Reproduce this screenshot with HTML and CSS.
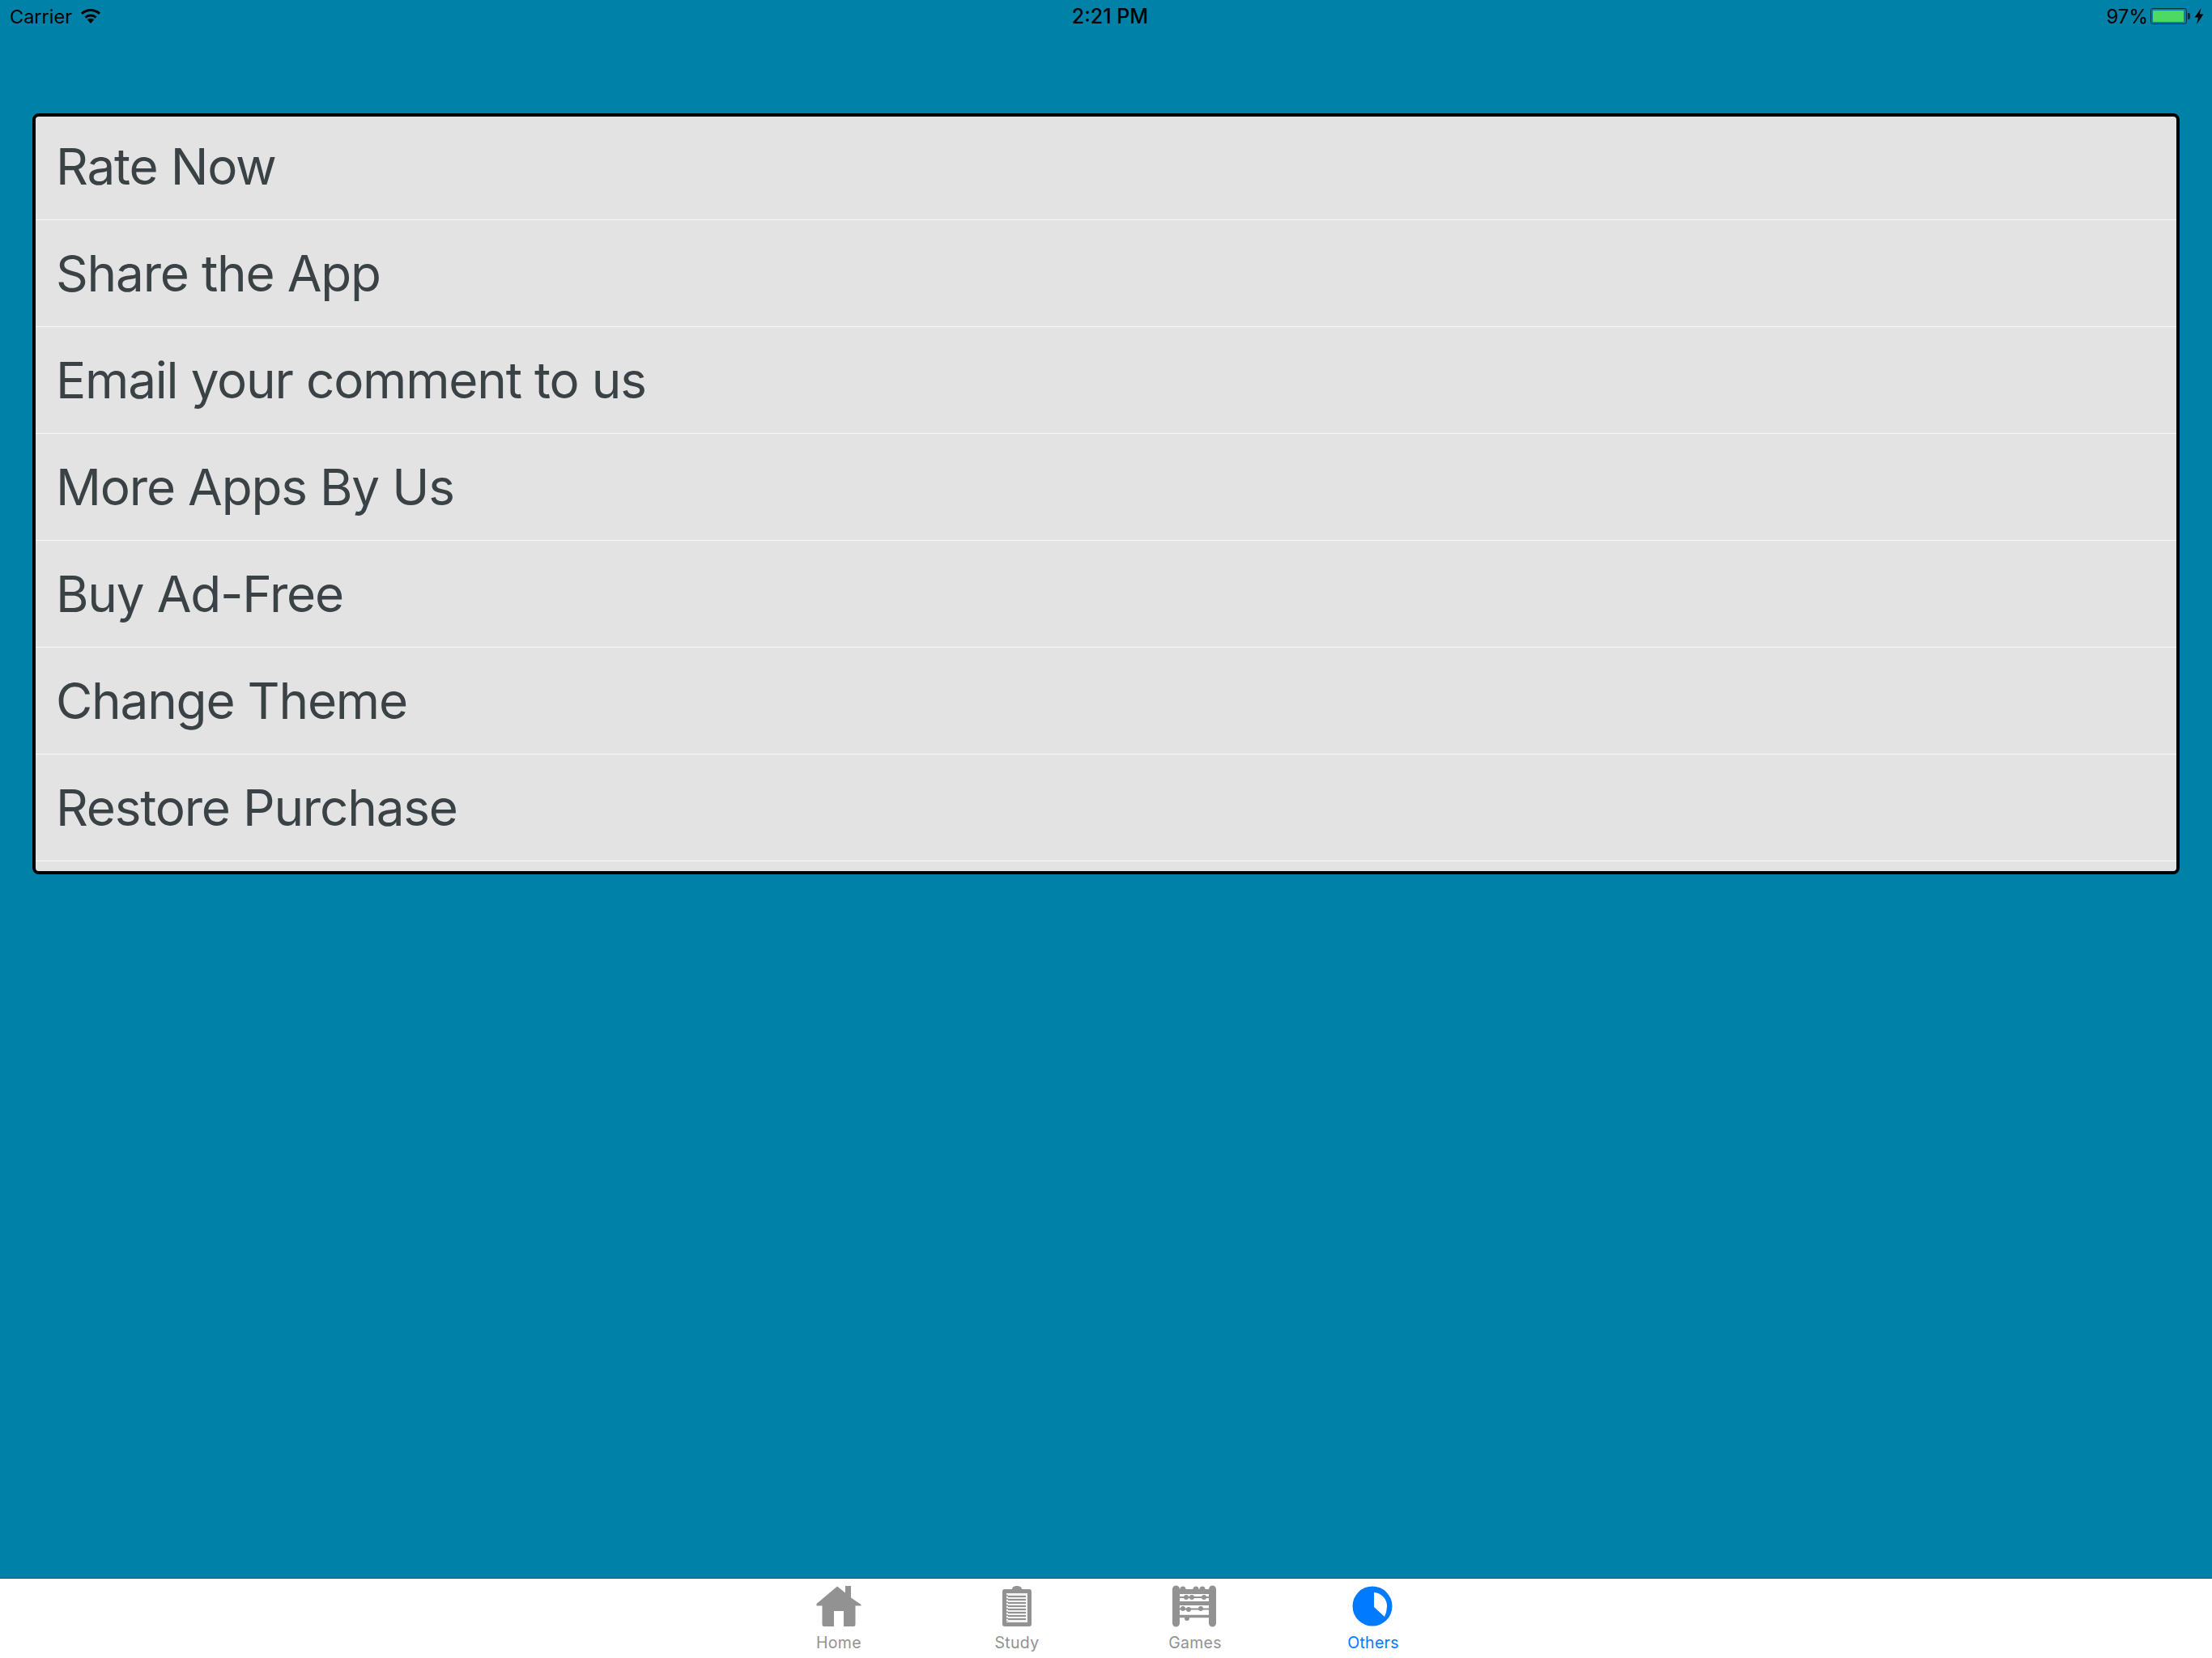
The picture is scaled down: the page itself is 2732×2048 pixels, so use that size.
FILE: index.html
```html
<!DOCTYPE html>
<html lang="en">
<head>
    <meta charset="UTF-8">
    <meta name="viewport" content="width=device-width, initial-scale=1.0">
    <title>Others</title>
    <link rel="stylesheet" href="styles.css">
</head>
<body>

    <div class="status-bar">
        <div class="status-left">
            <span class="carrier">Carrier</span>
            <svg class="wifi" width="26" height="18" viewBox="0 0 26 18">
                <path d="M13 18 L8.8 13.2 C11.2 11.2 14.8 11.2 17.2 13.2 Z" fill="#000"/>
                <path d="M6.4 10.6 C10.2 7.2 15.8 7.2 19.6 10.6" fill="none" stroke="#000" stroke-width="3"/>
                <path d="M2 5.8 C8.4 0.2 17.6 0.2 24 5.8" fill="none" stroke="#000" stroke-width="3"/>
            </svg>
        </div>
        <div class="status-time">2:21 PM</div>
        <div class="status-right">
            <span class="percent">97%</span>
            <div class="battery">
                <div class="battery-level"></div>
            </div>
            <div class="battery-tip"></div>
            <svg class="bolt" width="12" height="20" viewBox="0 0 12 20">
                <path d="M8.5 0 L0.5 11.5 H5 L3 20 L11.500 7.500 H6.800 Z" fill="#000"/>
            </svg>
        </div>
    </div>

    <main class="content">
        <ul class="menu">
            <li class="menu-row">Rate Now</li>
            <li class="menu-row">Share the App</li>
            <li class="menu-row">Email your comment to us</li>
            <li class="menu-row">More Apps By Us</li>
            <li class="menu-row">Buy Ad-Free</li>
            <li class="menu-row">Change Theme</li>
            <li class="menu-row">Restore Purchase</li>
        </ul>
    </main>

    <nav class="tab-bar">
        <div class="tab">
            <svg class="tab-icon" width="60" height="52" viewBox="0 0 60 52">
                <path d="M2.500 23 L28 1.500 L38 9.500 V1 H45 V15.500 L57.500 24 V25.500 H50.500 V49 Q50.500 51 48 51 H36 V32 H24 V51 H12 Q9.500 51 9.500 49 V25.500 H2.500 Z" fill="#929292"/>
            </svg>
            <span class="tab-label">Home</span>
        </div>
        <div class="tab">
            <svg class="tab-icon" width="60" height="52" viewBox="0 0 60 52">
                <path d="M15 5 H24 C24 -0.500 36 -0.500 36 5 H45 Q48 5 48 8 V48 Q48 51 45 51 H15 Q12 51 12 48 V8 Q12 5 15 5 Z" fill="#929292"/>
                <rect x="17" y="10" width="26" height="36" fill="#f2f2f2"/>
                <path d="M19 14 H41 M19 18 H41 M19 22 H41 M19 26 H41 M19 30 H41 M19 34 H41 M19 38 H41 M19 42 H41" stroke="#929292" stroke-width="2"/>
                <path d="M18 12 V45" stroke="#929292" stroke-width="1.500" stroke-dasharray="2 2"/>
            </svg>
            <span class="tab-label">Study</span>
        </div>
        <div class="tab">
            <svg class="tab-icon" width="60" height="52" viewBox="0 0 60 52">
                <path d="M6.500 5 V47 M51.500 5 V47" stroke="#929292" stroke-width="9" stroke-linecap="round"/>
                <path d="M6 8 H52" stroke="#929292" stroke-width="6"/>
                <path d="M6 22.500 H52" stroke="#929292" stroke-width="5"/>
                <path d="M6 38.500 H52" stroke="#929292" stroke-width="3.500"/>
                <path d="M6 15 H52 M6 29.500 H52" stroke="#929292" stroke-width="2"/>
                <g fill="#929292">
                    <circle cx="15" cy="5" r="3.500"/>
                    <circle cx="31" cy="5" r="3.500"/>
                    <circle cx="39" cy="5" r="3.500"/>
                    <circle cx="19" cy="15" r="3"/>
                    <circle cx="26" cy="15" r="3"/>
                    <circle cx="41" cy="15" r="3"/>
                    <circle cx="15" cy="29" r="3"/>
                    <circle cx="22" cy="30" r="3"/>
                    <circle cx="37" cy="29" r="3"/>
                    <circle cx="20" cy="41" r="3"/>
                </g>
            </svg>
            <span class="tab-label">Games</span>
        </div>
        <div class="tab tab-active">
            <svg class="tab-icon" width="60" height="52" viewBox="0 0 60 52">
                <circle cx="29" cy="26" r="24.500" fill="#007aff"/>
                <path d="M31 9 A17 17 0 0 1 47 26 Q47 33 44 39 L31 27 Z" fill="#fff"/>
            </svg>
            <span class="tab-label">Others</span>
        </div>
    </nav>

</body>
</html>
```

FILE: styles.css
```css
html,
body {
    height: 100%;
}

body {
    margin: 0;
    display: flex;
    flex-direction: column;
    background-color: #0082a8;
    color: #000;
    font-family: "Inter", "Liberation Sans", sans-serif;
}

/* status bar */
.status-bar {
    display: grid;
    grid-template-columns: 1fr auto 1fr;
    align-items: center;
    height: 40px;
    padding: 0 10px 0 12px;
    font-size: 24px;
}

.status-left,
.status-right {
    display: flex;
    align-items: center;
}

.status-left {
    gap: 10px;
}

.status-right {
    justify-content: flex-end;
}

.carrier {
    font-size: 23.5px;
}

.status-time {
    margin-left: 8px;
    font-size: 25px;
    font-weight: 500;
}

.percent {
    margin-right: 3px;
}

.battery {
    box-sizing: border-box;
    width: 45px;
    height: 20px;
    padding: 2px;
    border: 1px solid #06303f;
    border-radius: 3px;
}

.battery-level {
    width: 97%;
    height: 100%;
    background-color: #4cd964;
    border-radius: 1px;
}

.battery-tip {
    width: 3px;
    height: 8px;
    margin-left: 1px;
    background-color: #06303f;
    border-radius: 0 2px 2px 0;
}

.bolt {
    margin-left: 5px;
}

/* menu */
.content {
    flex: 1;
    padding: 100px 40px 0;
}

.menu {
    margin: 0;
    padding: 0 0 12px;
    list-style: none;
    background-color: #e3e3e3;
    border: 4px solid #000;
    border-radius: 8px;
}

.menu-row {
    display: flex;
    align-items: center;
    box-sizing: border-box;
    height: 132px;
    padding: 0 0 0 25px;
    border-bottom: 1px solid #f7f7f7;
    color: #3a4246;
    font-size: 62px;
    letter-spacing: -1.2px;
}

.menu-row:first-child {
    height: 128px;
    padding-bottom: 4px;
}

/* tab bar */
.tab-bar {
    display: flex;
    justify-content: center;
    box-sizing: border-box;
    height: 99px;
    padding: 8px 0 0;
    background-color: #fff;
    border-top: 1px solid #05566e;
}

.tab {
    display: flex;
    flex-direction: column;
    align-items: center;
    width: 220px;
    color: #929292;
}

.tab-active {
    color: #007aff;
}

.tab-label {
    margin-top: 7px;
    font-size: 19.5px;
    letter-spacing: 0.3px;
}
```
